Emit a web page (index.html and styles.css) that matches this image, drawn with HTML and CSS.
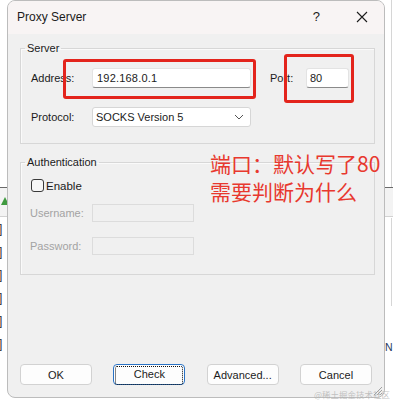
FILE: index.html
```html
<!DOCTYPE html>
<html lang="en">
  <head>
    <meta charset="UTF-8" />
    <title>Proxy Server</title>
    <link rel="stylesheet" href="styles.css">
  </head>
  <body>
    <div class="side side-left">
      <div class="side-top"></div>
      <div class="side-band">
        <svg width="7" height="10" viewBox="0 0 7 10"><polygon points="4,1 8,9 0,9" fill="#3f9a3f"/></svg>
      </div>
      <div class="side-list">
        <div class="bracket">]</div>
        <div class="bracket">]</div>
        <div class="bracket">]</div>
        <div class="bracket">]</div>
        <div class="bracket">]</div>
        <div class="bracket">]</div>
      </div>
    </div>

    <div class="dialog">
      <div class="titlebar">
        <span class="title">Proxy Server</span>
        <span class="help">?</span>
        <svg class="close" width="12" height="12" viewBox="0 0 12 12">
          <path d="M1 1 L11 11 M11 1 L1 11" stroke="#1b1b1b" stroke-width="1.1" fill="none"/>
        </svg>
      </div>

      <fieldset class="group group-server">
        <legend>Server</legend>
        <div class="row">
          <span class="lbl">Address:</span>
          <div class="field field-address">192.168.0.1</div>
          <span class="lbl lbl-port">Port:</span>
          <div class="field field-port">80</div>
        </div>
        <div class="row row-proto">
          <span class="lbl">Protocol:</span>
          <div class="select">
            <span>SOCKS Version 5</span>
            <svg width="10" height="6" viewBox="0 0 10 6"><path d="M1 1 L5 5 L9 1" stroke="#555" fill="none"/></svg>
          </div>
        </div>
      </fieldset>

      <fieldset class="group group-auth">
        <legend>Authentication</legend>
        <div class="check-row">
          <span class="checkbox"></span>
          <span>Enable</span>
        </div>
        <div class="row-small">
          <span class="lbl lbl-off">Username:</span>
          <div class="field-off"></div>
        </div>
        <div class="row-small row-pass">
          <span class="lbl lbl-off">Password:</span>
          <div class="field-off"></div>
        </div>
      </fieldset>

      <div class="buttons">
        <button class="btn">OK</button>
        <button class="btn btn-focus"><span>Check</span></button>
        <button class="btn">Advanced...</button>
        <button class="btn">Cancel</button>
      </div>

      <!-- annotations drawn on top of the screenshot -->
      <div class="mark mark-address"></div>
      <div class="mark mark-port"></div>
      <div class="note">端口：默认写了80<br>需要判断为什么</div>

      <svg class="grip" width="11" height="11" viewBox="0 0 11 11">
        <path d="M10 2 L2 10 M10 5 L5 10 M10 8 L8 10" stroke="#a0a0a0" fill="none"/>
      </svg>
    </div>

    <div class="side side-right">
      <div class="side-top"></div>
      <div class="side-band"></div>
      <div class="side-list">
        <div class="right-line"></div>
        <div class="letter">N</div>
      </div>
    </div>

    <div class="watermark">@稀土掘金技术社区</div>
  </body>
</html>
```

FILE: styles.css
```css
body {
  margin: 0;
  height: 405px;
  overflow: hidden;
  display: flex;
  background-color: #ffffff;
  font-family: "Liberation Sans", Arial, sans-serif;
  font-size: 11px;
  color: #1b1b1b;
  position: relative;
}

/* window pieces peeking out behind the dialog */
.side {
  display: flex;
  flex-direction: column;
  overflow: hidden;
}

.side-left {
  width: 7px;
}

.side-right {
  width: 8px;
}

.side-top {
  height: 187px;
}

.side-right .side-top {
  border-right: 1px solid #d6d6d6;
  margin-right: 1px;
}

.side-band {
  height: 28px;
  border-top: 1px solid #6a6a6a;
  border-bottom: 1px solid #d2d2d2;
  background-color: #f3f3f3;
}

.side-band svg {
  display: block;
  margin-top: 8px;
  margin-left: 1px;
}

.side-list {
  padding-top: 1px;
}

.bracket {
  height: 23px;
  line-height: 23px;
  font-size: 12px;
  color: #333;
  margin-left: -1px;
}

.right-line {
  height: 88px;
  margin-left: 6px;
  border-left: 1px solid #d6d6d6;
}

.letter {
  margin-top: 34px;
  font-size: 10.5px;
  line-height: 14px;
  color: #1f3a62;
}

/* dialog */
.dialog {
  position: relative;
  box-sizing: border-box;
  width: 378px;
  height: 398px;
  display: flex;
  flex-direction: column;
  border: 1px solid #bcbcbc;
  border-radius: 8px;
  background-color: #f0f0f0;
}

.titlebar {
  height: 33px;
  display: flex;
  align-items: center;
  padding: 0 0 2px 9px;
  box-sizing: border-box;
  background-color: #f8f4f4;
  border-radius: 7px 7px 0 0;
}

.title {
  font-size: 12px;
  flex: 1;
}

.help {
  font-size: 13px;
  margin-right: 36px;
}

.close {
  margin-right: 16px;
}

.group {
  margin: 7px 9px 0 12px;
  border: 1px solid #d7d7d7;
  box-shadow: inset 1px 1px 0 #fafafa;
  min-width: 0;
}

.group legend {
  padding: 0 2px;
  margin-left: -6px;
  line-height: 14px;
  font-size: 11px;
}

.group-server {
  padding: 13px 0 16px 10px;
}

.group-auth {
  margin-top: 11px;
  padding: 10px 0 19px 10px;
}

.row {
  display: flex;
  align-items: center;
  height: 20px;
}

.row-proto {
  margin-top: 19px;
}

.lbl {
  width: 61px;
  flex: none;
}

.lbl-port {
  width: 36px;
  margin-left: 19px;
}

.lbl-off {
  color: #a3a3a3;
  margin-left: -1px;
  margin-right: 1px;
}

.field {
  box-sizing: border-box;
  height: 20px;
  line-height: 19px;
  padding-left: 4px;
  background-color: #ffffff;
  border: 1px solid #e3e3e3;
  border-bottom-color: #8a8a8a;
  border-radius: 3px;
}

.field-address {
  width: 159px;
  letter-spacing: 0.2px;
}

.field-port {
  width: 43px;
  padding-left: 3px;
}

.select {
  box-sizing: border-box;
  width: 159px;
  height: 20px;
  display: flex;
  align-items: center;
  justify-content: space-between;
  padding: 0 6px 0 3px;
  background-color: #ffffff;
  border: 1px solid #d6d6d6;
  border-radius: 3px;
}

.check-row {
  display: flex;
  align-items: center;
  height: 13px;
  font-size: 11.5px;
}

.checkbox {
  box-sizing: border-box;
  width: 13px;
  height: 13px;
  margin-right: 2px;
  border: 1px solid #3a3a3a;
  border-radius: 3px;
  background-color: #f7f7f7;
}

.row-small {
  display: flex;
  align-items: center;
  height: 18px;
  margin-top: 12px;
}

.row-pass {
  margin-top: 15px;
}

.field-off {
  box-sizing: border-box;
  width: 102px;
  height: 18px;
  border: 1px solid #dcdcdc;
  background-color: #f0f0f0;
}

.buttons {
  margin-top: auto;
  padding: 0 12px 12px 12px;
  display: flex;
  justify-content: space-between;
}

.btn {
  box-sizing: border-box;
  width: 72px;
  height: 21px;
  padding: 0;
  font-family: "Liberation Sans", Arial, sans-serif;
  font-size: 11px;
  color: #1b1b1b;
  background-color: #fdfdfd;
  border: 1px solid #d2d2d2;
  border-radius: 4px;
}

.btn-focus {
  border-color: #2a72c4;
  padding: 1px;
}

.btn-focus span {
  display: block;
  height: 100%;
  line-height: 15px;
  border: 1px dotted #111;
  border-radius: 2px;
}

/* red annotations */
.mark {
  position: absolute;
  box-sizing: border-box;
  border: 3px solid #e3241c;
  border-radius: 3px;
}

.mark-address {
  left: 55px;
  top: 58px;
  width: 193px;
  height: 40px;
}

.mark-port {
  left: 276px;
  top: 53px;
  width: 70px;
  height: 49px;
}

.note {
  position: absolute;
  left: 202px;
  top: 148px;
  font-family: "Noto Sans CJK SC", sans-serif;
  font-size: 21px;
  line-height: 28px;
  color: #e8382e;
}

.grip {
  position: absolute;
  right: 1px;
  bottom: 1px;
}

.watermark {
  position: absolute;
  right: 3px;
  bottom: 5px;
  font-family: "Noto Sans CJK SC", sans-serif;
  font-size: 8.5px;
  color: rgba(170, 170, 170, 0.7);
}
```
